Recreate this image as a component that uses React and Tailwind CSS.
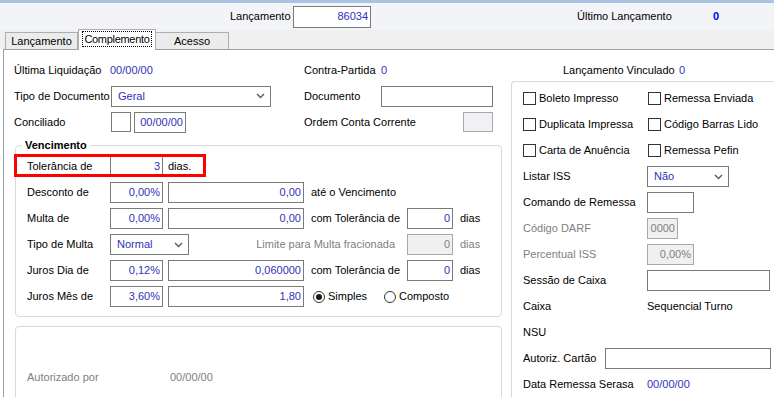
import React from 'react';

const blue = 'text-[#3131b8]';

function Chevron() {
  return (
    <svg width="9" height="6" viewBox="0 0 9 6" className="shrink-0">
      <path d="M1 1 L4.5 4.5 L8 1" fill="none" stroke="#606060" strokeWidth="1.5" />
    </svg>
  );
}

function Input({ w, value, disabled, className = '' }) {
  return (
    <div
      className={`${w} h-[21px] border flex items-center justify-end pr-[2px] ${
        disabled ? 'bg-[#f0f0f0] border-[#a8a8a8] text-[#808080]' : `bg-white border-[#7a7a7a] ${blue}`
      } ${className}`}
    >
      {value}
    </div>
  );
}

function Select({ w, value }) {
  return (
    <div className={`${w} h-[21px] border border-[#7a7a7a] bg-white flex items-center justify-between pl-[6px] pr-[5px]`}>
      <span className={blue}>{value}</span>
      <Chevron />
    </div>
  );
}

function Check({ label, w }) {
  return (
    <div className={`${w} flex items-center`}>
      <span className="w-[13px] h-[13px] border border-[#333] bg-white shrink-0" />
      <span className="ml-[3px]">{label}</span>
    </div>
  );
}

function Radio({ label, checked }) {
  return (
    <div className="flex items-center">
      <span className="w-[12px] h-[12px] rounded-full border border-[#333] bg-white flex items-center justify-center">
        {checked && <span className="w-[6px] h-[6px] rounded-full bg-[#1a1a1a]" />}
      </span>
      <span className="ml-[3px]">{label}</span>
    </div>
  );
}

function Row({ children, className = '' }) {
  return <div className={`h-[21px] flex items-center ${className}`}>{children}</div>;
}

export default function App() {
  return (
    <div className="w-[774px] h-[397px] overflow-hidden bg-white flex flex-col text-[11px] text-black font-['Liberation_Sans',Arial,sans-serif]">
      {/* top strip */}
      <div className="h-[3px] bg-[#a9c4e2] shrink-0" />

      {/* header */}
      <div className="h-[27px] shrink-0 bg-[#f3f4f8] flex items-center">
        <span className="ml-[230px] w-[63px]">Lançamento</span>
        <Input w="w-[78px]" value="86034" className="h-[22px]" />
        <span className="ml-[206px] w-[136px]">Último Lançamento</span>
        <span className="font-bold text-[#0000ee]">0</span>
      </div>

      {/* tabs */}
      <div className="h-[19px] shrink-0 bg-[#f0f0f0] flex items-end pl-[5px]">
        <div className="w-[73px] h-[17px] border border-b-0 border-[#adadad] bg-[#ececec] flex items-center justify-center">
          Lançamento
        </div>
        <div className="w-[78px] h-[21px] -mb-[1px] border border-b-0 border-[#adadad] bg-white flex items-start justify-center pt-[1px] relative z-10">
          <span className="border border-dotted border-black px-[1px] leading-[14px] tracking-[-0.3px]">Complemento</span>
        </div>
        <div className="w-[73px] h-[17px] border border-b-0 border-l-0 border-[#adadad] bg-[#ececec] flex items-center justify-center">
          Acesso
        </div>
      </div>

      {/* content */}
      <div className="flex-1 ml-[3px] border-t border-l border-[#a0a0a0] bg-white flex flex-col min-h-0">
        <div className="h-[31px] shrink-0 pt-[10px] pl-[10px]">
          <div className="h-[20px] flex items-center">
            <span className="w-[96px]">Última Liquidação</span>
            <span className={`w-[194px] ${blue}`}>00/00/00</span>
            <span className="w-[77px]">Contra-Partida</span>
            <span className={`w-[182px] ${blue}`}>0</span>
            <span className="w-[116px]">Lançamento Vinculado</span>
            <span className={blue}>0</span>
          </div>
        </div>

        <div className="flex flex-1 min-h-0">
          {/* left column */}
          <div className="w-[507px] shrink-0 flex flex-col">
            <div className="pl-[10px] pt-[5px] flex flex-col gap-[6px]">
              <div className="h-[20px] flex items-center">
                <span className="w-[97px]">Tipo de Documento</span>
                <Select w="w-[160px] h-[20px]" value="Geral" />
                <span className="ml-[33px] w-[77px]">Documento</span>
                <Input w="w-[112px]" value="" />
              </div>
              <div className="h-[20px] flex items-center">
                <span className="w-[97px]">Conciliado</span>
                <span className="w-[20px] h-[20px] border border-[#7a7a7a] bg-white" />
                <Input w="w-[52px] ml-[3px] h-[20px]" value="00/00/00" />
                <span className="ml-[118px] w-[159px]">Ordem Conta Corrente</span>
                <span className="w-[30px] h-[20px] border border-[#a8a8a8] bg-[#f0f0f5]" />
              </div>
            </div>

            {/* Vencimento */}
            <div className="relative ml-[11px] w-[487px] mt-[13px] border border-[#d5dae0] rounded-[4px] pt-[10px] pb-[9px] pl-[11px] flex flex-col gap-[5px] shrink-0">
              <span className="absolute -top-[8px] left-[6px] bg-white px-[3px] font-bold leading-[14px]">Vencimento</span>
              <span className="absolute left-[-2px] top-[8px] w-[192px] h-[23px] border-[3px] border-[#ff0000]" />

              <Row>
                <span className="w-[83px]">Tolerância de</span>
                <div className={`w-[53px] h-[21px] border-l border-r border-[#7a7a7a] flex items-center justify-end pr-[2px] ${blue}`}>3</div>
                <span className="ml-[5px]">dias.</span>
              </Row>
              <Row>
                <span className="w-[83px]">Desconto de</span>
                <Input w="w-[53px]" value="0,00%" />
                <Input w="w-[136px] ml-[5px]" value="0,00" />
                <span className="ml-[7px]">até o Vencimento</span>
              </Row>
              <Row>
                <span className="w-[83px]">Multa de</span>
                <Input w="w-[53px]" value="0,00%" />
                <Input w="w-[136px] ml-[5px]" value="0,00" />
                <span className="ml-[7px] w-[96px]">com Tolerância de</span>
                <Input w="w-[46px]" value="0" />
                <span className="ml-[7px]">dias</span>
              </Row>
              <Row>
                <span className="w-[83px]">Tipo de Multa</span>
                <Select w="w-[79px]" value="Normal" />
                <span className="w-[218px] text-right pr-[12px] text-[#808080]">Limite para Multa fracionada</span>
                <Input w="w-[46px]" value="0" disabled />
                <span className="ml-[7px] text-[#808080]">dias</span>
              </Row>
              <Row>
                <span className="w-[83px]">Juros Dia de</span>
                <Input w="w-[53px]" value="0,12%" />
                <Input w="w-[136px] ml-[5px]" value="0,060000" />
                <span className="ml-[7px] w-[96px]">com Tolerância de</span>
                <Input w="w-[46px]" value="0" />
                <span className="ml-[7px]">dias</span>
              </Row>
              <Row>
                <span className="w-[83px]">Juros Mês de</span>
                <Input w="w-[53px]" value="3,60%" />
                <Input w="w-[136px] ml-[5px]" value="1,80" />
                <div className="ml-[9px] w-[71px]">
                  <Radio label="Simples" checked />
                </div>
                <Radio label="Composto" />
              </Row>
            </div>

            {/* Autorizado */}
            <div className="ml-[11px] w-[487px] mt-[9px] h-[100px] shrink-0 border border-[#d5dae0] rounded-[4px] pt-[40px] pl-[11px]">
              <Row className="text-[#808080]">
                <span className="w-[143px]">Autorizado por</span>
                <span>00/00/00</span>
              </Row>
            </div>
          </div>

          {/* right panel */}
          <div className="flex-1 border-l border-t border-[#d5dae0] rounded-tl-[4px] pt-[6px] pl-[11px] flex flex-col gap-[5px]">
            <Row>
              <Check w="w-[125px]" label="Boleto Impresso" />
              <Check label="Remessa Enviada" />
            </Row>
            <Row>
              <Check w="w-[125px]" label="Duplicata Impressa" />
              <Check label="Código Barras Lido" />
            </Row>
            <Row>
              <Check w="w-[125px]" label="Carta de Anuência" />
              <Check label="Remessa Pefin" />
            </Row>
            <Row>
              <span className="w-[124px]">Listar ISS</span>
              <Select w="w-[82px]" value="Não" />
            </Row>
            <Row>
              <span className="w-[124px]">Comando de Remessa</span>
              <Input w="w-[47px]" value="" />
            </Row>
            <Row className="text-[#808080]">
              <span className="w-[124px]">Código DARF</span>
              <Input w="w-[31px]" value="0000" disabled />
            </Row>
            <Row className="text-[#808080]">
              <span className="w-[124px]">Percentual ISS</span>
              <Input w="w-[47px]" value="0,00%" disabled />
            </Row>
            <Row>
              <span className="w-[124px]">Sessão de Caixa</span>
              <Input w="w-[123px]" value="" />
            </Row>
            <Row>
              <span className="w-[124px]">Caixa</span>
              <span>Sequencial Turno</span>
            </Row>
            <Row>
              <span>NSU</span>
            </Row>
            <Row>
              <span className="w-[82px]">Autoriz. Cartão</span>
              <Input w="w-[166px]" value="" />
            </Row>
            <Row>
              <span className="w-[124px]">Data Remessa Serasa</span>
              <span className={blue}>00/00/00</span>
            </Row>
          </div>
        </div>
      </div>
    </div>
  );
}
